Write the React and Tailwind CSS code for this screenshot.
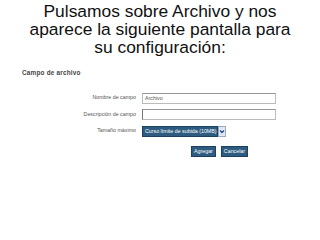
import React from 'react';

const FormRow = ({ label, children }) => (
  <div className="flex items-center h-[16.5px]">
    <span className="w-[142px] pr-[6px] text-right text-[5.3px] text-[#555] whitespace-nowrap">{label}</span>
    {children}
  </div>
);

const App = () => {
  return (
    <div className="w-[320px] h-[240px] bg-white overflow-hidden" style={{ fontFamily: '"Liberation Sans", Arial, sans-serif' }}>
      <h1 className="pt-[3px] text-center text-[17.4px] leading-[17.8px] text-[#111]">
        Pulsamos sobre Archivo y nos
        <br />
        aparece la siguiente pantalla para
        <br />
        su configuración:
      </h1>

      <div className="mt-[12px]">
        <p className="pl-[22px] text-[6.4px] font-bold text-[#444] tracking-[0.2px]">Campo de archivo</p>

        <div className="mt-[12px] flex flex-col">
          <FormRow label="Nombre de campo">
            <div className="w-[134px] h-[11px] border border-[#bbb] border-t-[#999] px-[2px] text-[5.3px] leading-[9px] text-[#555]">Archivo</div>
          </FormRow>
          <FormRow label="Descripción de campo">
            <div className="w-[134px] h-[11px] border border-[#bbb] border-t-[#999] border-l-[#777]" />
          </FormRow>
          <FormRow label="Tamaño máximo">
            <div className="flex items-center h-[11px]">
              <div className="h-[11px] w-[76px] bg-[#2e5c80] border border-[#1d4260] px-[2px] text-[5.3px] leading-[9px] text-white whitespace-nowrap overflow-hidden">
                Curso límite de subida (10MB)
              </div>
              <div className="h-[11px] w-[8px] bg-[#dfe8f5] border border-[#9ab] flex items-center justify-center">
                <svg width="6" height="5" viewBox="0 0 6 5">
                  <path d="M1 1.5 L3 3.5 L5 1.5" stroke="#2e4f8a" strokeWidth="1.4" fill="none" />
                </svg>
              </div>
            </div>
          </FormRow>
        </div>

        <div className="mt-[6px] flex pl-[191px] gap-[5px]">
          <button className="h-[11px] px-[2px] bg-[#2e5c80] border border-[#1d4260] text-[5.3px] leading-[9px] text-white">Agregar</button>
          <button className="h-[11px] px-[2px] bg-[#2e5c80] border border-[#1d4260] text-[5.3px] leading-[9px] text-white">Cancelar</button>
        </div>
      </div>
    </div>
  );
};

export default App;
